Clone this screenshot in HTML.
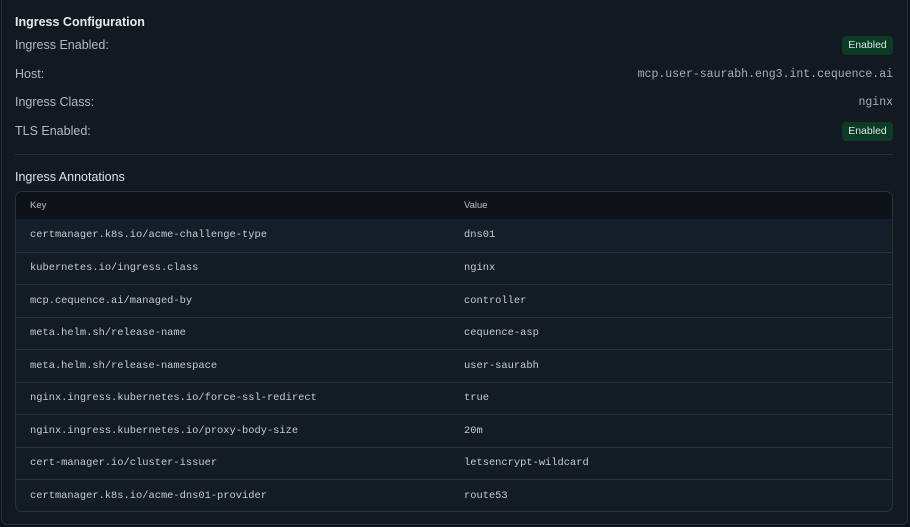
<!DOCTYPE html>
<html><head><style>
*{box-sizing:border-box;margin:0;padding:0}
body{width:910px;height:527px;background:#0e1319;font-family:"Liberation Sans",sans-serif;overflow:hidden;position:relative}
.card{position:absolute;left:1px;top:-6px;width:907px;height:531px;background:#121920;border:1px solid #272f38;border-radius:6px}
.t{position:absolute;left:15px;color:#e6e9ec;font-size:12.5px;font-weight:bold}
.l{position:absolute;left:15px;color:#b4b9c0;font-size:12.5px}
.v{position:absolute;right:17px;color:#a9aeb5;font-family:"Liberation Mono",monospace;font-size:11.5px}
.b{position:absolute;right:17px;width:51px;height:19px;background:#0b3a25;color:#d6eadc;border-radius:4px;font-size:10.5px;text-align:center;line-height:19px}
.hr{position:absolute;left:15px;width:878px;top:154px;height:1px;background:#262e37}
.tbl{position:absolute;left:15px;top:191px;width:878px;height:321px;border:1px solid #2a323c;border-radius:7px;overflow:hidden;background:#131b23}
.row{height:32.5px;border-top:1px solid #2a323c;position:relative;font-family:"Liberation Mono",monospace;font-size:10.4px;color:#c7ccd2}
.row span{position:absolute;top:50%;transform:translateY(-50%)}
.row .k{left:14px}.row .vv{left:448px}
.hd{height:27px;background:#0e131a;position:relative;font-size:9.5px;color:#b9bec5}
.hd span{position:absolute;top:8px}
</style></head><body>
<div class="card"></div>
<div class="t" style="top:15px">Ingress Configuration</div>
<div class="l" style="top:38px">Ingress Enabled:</div>
<div class="b" style="top:36px">Enabled</div>
<div class="l" style="top:67px">Host:</div>
<div class="v" style="top:68px">mcp.user-saurabh.eng3.int.cequence.ai</div>
<div class="l" style="top:95px">Ingress Class:</div>
<div class="v" style="top:96px">nginx</div>
<div class="l" style="top:124px">TLS Enabled:</div>
<div class="b" style="top:122px">Enabled</div>
<div class="hr"></div>
<div class="t" style="top:170px;font-weight:normal;color:#dde1e5">Ingress Annotations</div>
<div class="tbl">
<div class="hd"><span style="left:14px">Key</span><span style="left:448px">Value</span></div>
<div class="row" style="border-top:none;background:#131e28"><span class="k">certmanager.k8s.io/acme-challenge-type</span><span class="vv">dns01</span></div>
<div class="row"><span class="k">kubernetes.io/ingress.class</span><span class="vv">nginx</span></div>
<div class="row"><span class="k">mcp.cequence.ai/managed-by</span><span class="vv">controller</span></div>
<div class="row"><span class="k">meta.helm.sh/release-name</span><span class="vv">cequence-asp</span></div>
<div class="row"><span class="k">meta.helm.sh/release-namespace</span><span class="vv">user-saurabh</span></div>
<div class="row"><span class="k">nginx.ingress.kubernetes.io/force-ssl-redirect</span><span class="vv">true</span></div>
<div class="row"><span class="k">nginx.ingress.kubernetes.io/proxy-body-size</span><span class="vv">20m</span></div>
<div class="row"><span class="k">cert-manager.io/cluster-issuer</span><span class="vv">letsencrypt-wildcard</span></div>
<div class="row"><span class="k">certmanager.k8s.io/acme-dns01-provider</span><span class="vv">route53</span></div>
</div>
</body></html>
